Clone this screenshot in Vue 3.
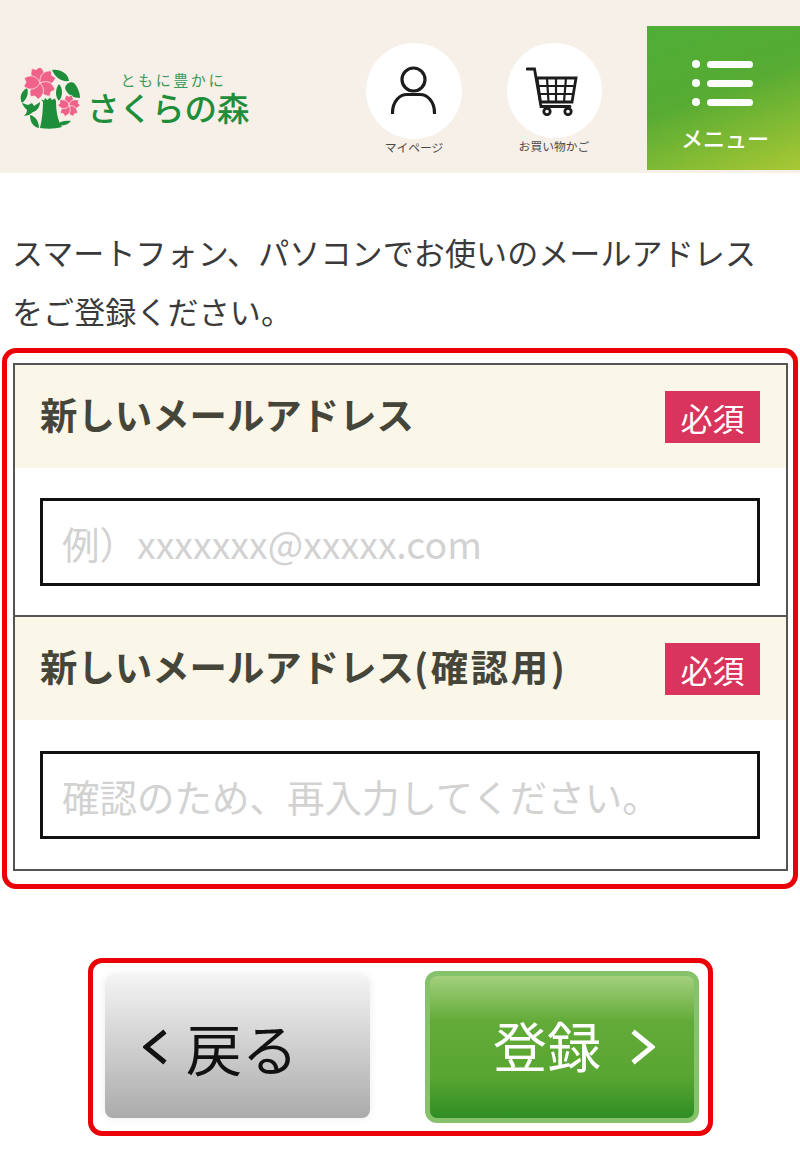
<template>
  <div class="page">
    <header class="header">
      <a class="logo" href="#">
        <svg class="logo-mark" viewBox="0 0 62 62" width="62" height="62">
          <g fill="#1f8e3a">
            <path d="M21 60C23 52 24 42 24 34L22 31.500L25 32.500L26 30L28.500 32L31 29.500L33 32L36 30.500L37 33C37 44 39 53 43 59C36 61 28 61 21 60Z" />
            <path d="M33 2C41 1 49 5 50 13C42 14 36 9 33 2Z" />
            <path d="M46 20C47 15 52 13 55 15C58 18 61 24 61 30C55 30 48 27 46 20Z" />
            <path d="M40 16C44 20 44 28 40 33C36 29 36 21 40 16Z" />
            <path d="M8 20C10 25 8 31 3 35C0 30 2 23 8 20Z" />
            <path d="M3 35L9 37L13 35L15 38L21 34C21 39 18 43 14 44L10 47L5 48C7 46 8 44 8 42C6 40 4 38 3 35Z" />
            <path d="M11 47C16 48 20 53 20 60C14 59 11 54 11 47Z" />
            <path d="M38 56C42 53 47 52 52 53C49 57 43 59 38 56Z" />
          </g>
          <g fill="#f0628a" stroke="#f6f0e9" stroke-width="0.700">
            <g v-for="a in petals" :key="'a' + a" :transform="`translate(21 15) rotate(${a - 15})`">
              <path d="M0 0C-8 -4 -8 -11 -4 -16L0 -14L4 -16C8 -11 8 -4 0 0Z" />
            </g>
            <g v-for="a in petals" :key="'b' + a" :transform="`translate(50 38) rotate(${a})`">
              <path d="M0 0C-5 -2 -5.500 -7 -2.500 -11L0 -9.500L2.500 -11C5.500 -7 5 -2 0 0Z" />
            </g>
          </g>
        </svg>
        <span class="logo-text">
          <span class="logo-sub">ともに豊かに</span>
          <span class="logo-name">さくらの森</span>
        </span>
      </a>

      <a class="round-link user-link" href="#">
        <span class="circle">
          <svg viewBox="0 0 48 48" width="48" height="48" fill="none" stroke="#1c1c1c" stroke-width="3.200" stroke-linecap="round">
            <circle cx="23.500" cy="13.500" r="11.500" />
            <path d="M2.500 47C2.500 35 10 28.500 17 28.500H30C37 28.500 44.500 35 44.500 47" />
          </svg>
        </span>
        <span class="round-label">マイページ</span>
      </a>

      <a class="round-link cart-link" href="#">
        <span class="circle">
          <svg viewBox="0 0 52 49" width="52" height="49" fill="none" stroke="#1c1c1c">
            <path d="M1 2H8.500L15 39.500H44" stroke-width="2.800" stroke-linecap="round" />
            <path d="M11 11H50L46 35H14.500Z" stroke-width="2.800" />
            <path d="M12 19H49M13.500 27H47.500M21 11L22.500 35M30 11V35M40 11L38 35" stroke-width="2.200" />
            <circle cx="21" cy="44.500" r="3.200" stroke-width="2.800" />
            <circle cx="42" cy="44.500" r="3.200" stroke-width="2.800" />
          </svg>
        </span>
        <span class="round-label">お買い物かご</span>
      </a>

      <a class="menu-btn" href="#">
        <span class="menu-icon">
          <span v-for="n in 3" :key="n" class="menu-line"><i></i><b></b></span>
        </span>
        <span class="menu-label">メニュー</span>
      </a>
    </header>

    <p class="lead">スマートフォン、パソコンでお使いのメールアドレスをご登録ください。</p>

    <section class="note-box form-box">
      <div class="form-table">
        <div v-for="f in fields" :key="f.label + f.placeholder" class="field">
          <div class="field-head">
            <span class="field-label">{{ f.label }}<span v-if="f.suffix" class="field-suffix">{{ f.suffix }}</span></span>
            <span class="required">必須</span>
          </div>
          <div class="field-body">
            <input class="field-input" type="text" :placeholder="f.placeholder" />
          </div>
        </div>
      </div>
    </section>

    <section class="note-box btn-box">
      <button class="btn btn-back" type="button">
        <svg class="chev" viewBox="0 0 24 36" width="24" height="36" fill="none" stroke="#111" stroke-width="5">
          <path d="M22 2.500L3 18L22 33.500" />
        </svg>
        <span>戻る</span>
      </button>
      <button class="btn btn-submit" type="button">
        <span>登録</span>
        <svg class="chev" viewBox="0 0 24 36" width="24" height="36" fill="none" stroke="#fff" stroke-width="5">
          <path d="M2 2.500L21 18L2 33.500" />
        </svg>
      </button>
    </section>
  </div>
</template>

<script setup>
const petals = [0, 72, 144, 216, 288];

const fields = [
  { label: '新しいメールアドレス', placeholder: '例）xxxxxxx@xxxxx.com' },
  { label: '新しいメールアドレス', suffix: '(確認用)', placeholder: '確認のため、再入力してください。' },
];
</script>

<style scoped>
.page {
  width: 800px;
  height: 1172px;
  overflow: hidden;
  background: #fff;
  font-family: "Noto Sans CJK JP", "Noto Sans", sans-serif;
  color: #333;
}

a {
  text-decoration: none;
  color: inherit;
}

.header {
  display: flex;
  align-items: flex-start;
  height: 173px;
  background: #f6f0e9;
}

.logo {
  flex: none;
  display: flex;
  align-items: center;
  width: 366px;
  height: 62px;
  margin-top: 67px;
  padding-left: 19px;
  box-sizing: border-box;
}

.logo-mark {
  flex: none;
  margin-top: 2px;
}

.logo-text {
  display: flex;
  flex-direction: column;
  align-items: center;
  margin-left: 6px;
  color: #1f8e3a;
}

.logo-sub {
  margin-left: 10px;
  font-size: 15px;
  line-height: 17px;
  letter-spacing: 2.600px;
  color: #3b9a57;
  white-space: nowrap;
}

.logo-name {
  font-size: 32.500px;
  line-height: 37px;
  font-weight: 500;
  white-space: nowrap;
}

.round-link {
  flex: none;
  display: flex;
  flex-direction: column;
  align-items: center;
  width: 96px;
  margin-top: 43px;
}

.cart-link {
  margin-left: 44px;
}

.circle {
  display: flex;
  align-items: center;
  justify-content: center;
  width: 96px;
  height: 96px;
  border-radius: 50%;
  background: #fff;
}

.cart-link .circle {
  width: 95px;
  height: 95px;
  padding-top: 1px;
  box-sizing: border-box;
}

.cart-link svg {
  margin-right: 5px;
}

.user-link svg {
  margin-bottom: 2px;
}

.round-label {
  font-size: 11.800px;
  line-height: 16px;
  color: #4a4a4a;
  white-space: nowrap;
}

.menu-btn {
  flex: none;
  display: flex;
  flex-direction: column;
  align-items: center;
  width: 153px;
  height: 144px;
  margin: 26px 0 0 45px;
  box-sizing: border-box;
  padding-top: 34px;
  background: linear-gradient(160deg, #4fae37 0%, #56ab33 45%, #a9c834 100%);
}

.menu-icon {
  display: flex;
  flex-direction: column;
  gap: 11px;
  margin-right: 3px;
}

.menu-line {
  display: flex;
  align-items: center;
  gap: 7px;
}

.menu-line i {
  width: 8px;
  height: 8px;
  border-radius: 50%;
  background: #fff;
}

.menu-line b {
  width: 46px;
  height: 7px;
  border-radius: 4px;
  background: #fff;
}

.menu-label {
  margin: 16px 0 0 3px;
  font-size: 22px;
  font-weight: 500;
  line-height: 30px;
  color: #fff;
}

.lead {
  margin: 49px 0 0;
  padding: 0 40px 0 12px;
  font-size: 31px;
  line-height: 59px;
  letter-spacing: 0.120px;
  color: #3a3a3a;
}

.note-box {
  box-sizing: border-box;
  border: 5px solid #ec0008;
  border-radius: 14px;
}

.form-box {
  width: 796px;
  height: 541px;
  margin: 8px 0 0 2px;
  padding: 10px 5px 12px 6px;
}

.form-table {
  border: 2px solid #555;
}

.field + .field {
  border-top: 2px solid #555;
}

.field-head {
  display: flex;
  align-items: center;
  justify-content: space-between;
  height: 103px;
  padding: 0 26px 0 25px;
  box-sizing: border-box;
  background: #faf6e8;
}

.field-label {
  padding-bottom: 6px;
  font-size: 37.400px;
  font-weight: 700;
  line-height: 50px;
  color: #45453a;
}

.field-suffix {
  letter-spacing: 2.600px;
}

.required {
  display: flex;
  align-items: center;
  justify-content: center;
  width: 95px;
  height: 52px;
  background: #d9345b;
  color: #fff;
  font-size: 32px;
}

.field-body {
  padding: 30px 26px 29px 25px;
}

.field:last-child .field-body {
  padding: 31px 26px 30px 25px;
}

.field-input {
  display: block;
  width: 100%;
  height: 88px;
  box-sizing: border-box;
  padding: 0 19px;
  border: 3px solid #111;
  border-radius: 0;
  outline: none;
  background: #fff;
  font-family: inherit;
  font-size: 37.500px;
}

.field-input::placeholder {
  color: #d2d2d2;
}

.btn-box {
  display: flex;
  align-items: center;
  width: 625px;
  height: 178px;
  margin: 69px 0 0 88px;
  padding: 0 9px 0 12px;
  gap: 55px;
}

.btn {
  display: flex;
  align-items: center;
  box-sizing: border-box;
  border: none;
  font-family: inherit;
  line-height: 1;
  padding: 0;
}

.btn-back {
  width: 265px;
  height: 143px;
  margin-top: -1px;
  padding-left: 38px;
  border-radius: 8px;
  background: linear-gradient(#f4f4f4, #ababab);
  box-shadow: 0 0 10px rgba(0, 0, 0, 0.08);
  color: #111;
  font-size: 56px;
}

.btn-back span {
  margin-left: 19px;
}

.btn-submit {
  width: 274px;
  height: 152px;
  padding-left: 63px;
  border: 5px solid #86c26c;
  border-radius: 12px;
  background: linear-gradient(#a4d07e 0%, #62ab38 32%, #5aa632 70%, #2f8e24 100%);
  color: #fff;
  font-size: 54px;
}

.btn-submit span {
  margin-top: -4px;
}

.btn-submit .chev {
  margin-left: 30px;
}
</style>
